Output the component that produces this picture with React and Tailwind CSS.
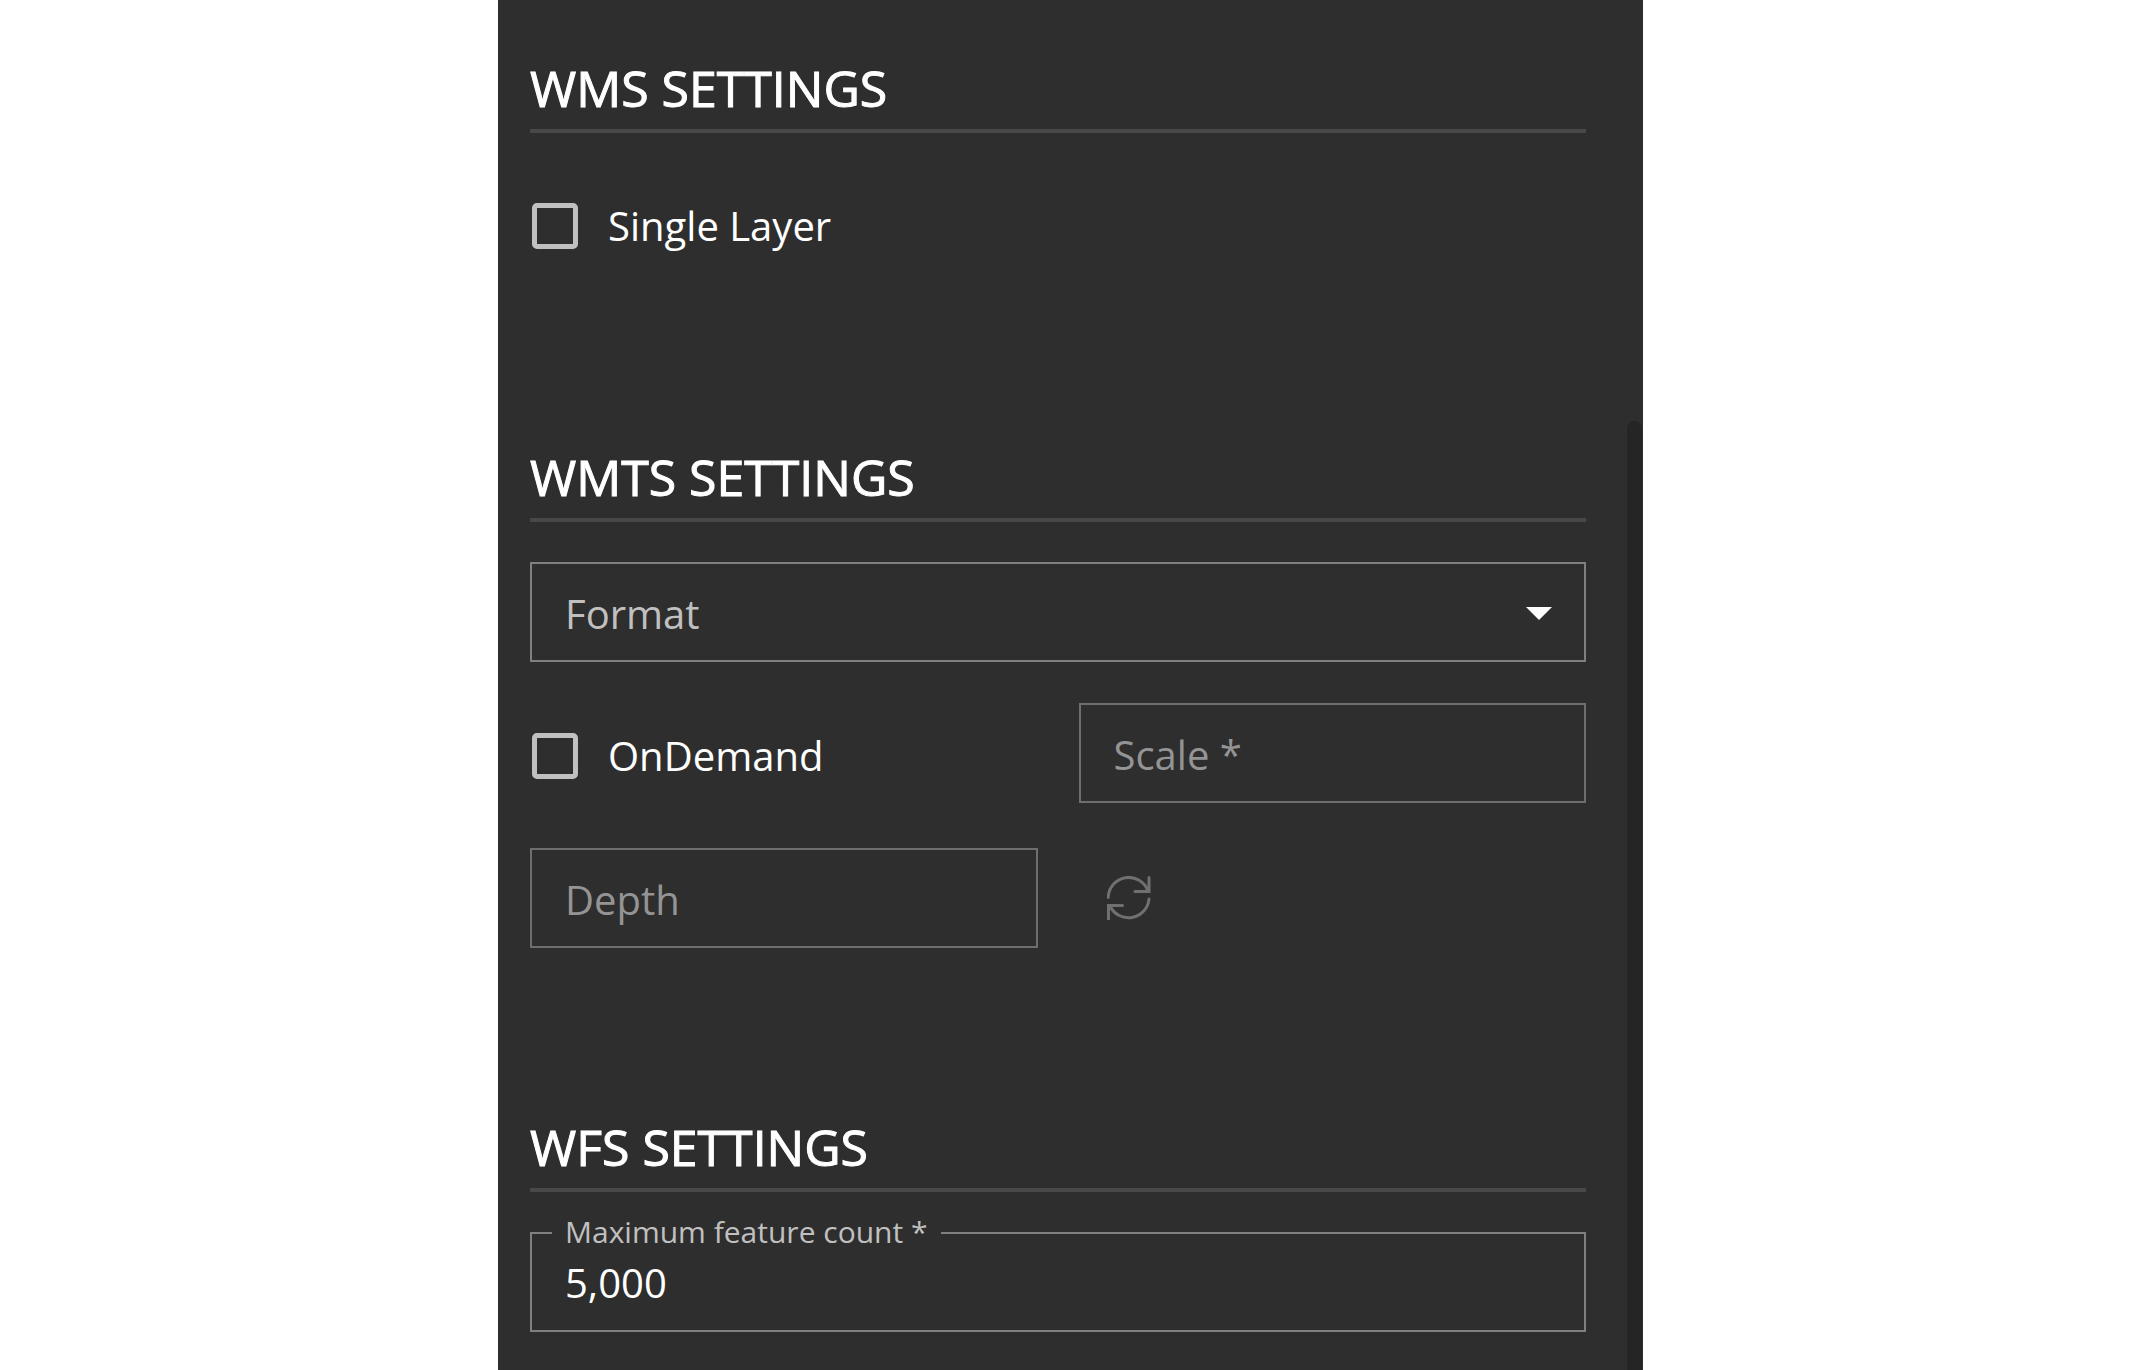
import React, { useState } from 'react';

const SectionTitle = ({ children }) => (
  <h2 className="border-b-4 border-[#484848] pb-[9px] text-[50px] leading-[64px] text-white [-webkit-text-stroke:1px_#fff]">
    {children}
  </h2>
);

const Checkbox = ({ id, label, checked, onChange }) => (
  <div className="flex h-[100px] items-center">
    <input
      type="checkbox"
      id={id}
      checked={checked}
      onChange={(e) => onChange(e.target.checked)}
      className="ml-[2px] size-[46px] shrink-0 appearance-none rounded-[5px] border-5 border-[#c0c0c0] checked:bg-[#c0c0c0]"
    />
    <label htmlFor={id} className="pl-[30px] text-[40px] leading-[56px] text-white">
      {label}
    </label>
  </div>
);

const EmptyField = ({ id, label }) => (
  <div className="relative">
    <input
      type="text"
      id={id}
      disabled
      className="block h-[100px] w-full border-2 border-[#6e6e6e] bg-transparent px-[34px] text-[40px]"
    />
    <label
      htmlFor={id}
      className="pointer-events-none absolute inset-0 flex items-center pt-[4px] pl-[35px] text-[40px] leading-[56px] text-[#949494]"
    >
      {label}
    </label>
  </div>
);

const RefreshIcon = () => (
  <svg
    width="44"
    height="44"
    viewBox="0 0 44 44"
    fill="none"
    stroke="currentColor"
    strokeWidth="3"
    strokeLinecap="round"
    aria-hidden="true"
  >
    <path d="M1.2 21.5A20.5 20.5 0 0 1 41 15" />
    <path d="M42 1.5V15.5H28" />
    <path d="M42 23A20.5 20.5 0 0 1 3 30" />
    <path d="M1.5 43V29.5H15.5" />
  </svg>
);

const App = () => {
  const [singleLayer, setSingleLayer] = useState(false);
  const [onDemand, setOnDemand] = useState(false);
  const [format, setFormat] = useState('');
  const [maxCount, setMaxCount] = useState('5,000');

  return (
    <div className="min-h-screen bg-white pr-[504px] pl-[498px] font-['Open_Sans',sans-serif]">
      <main className="relative min-h-screen bg-[#2e2e2e] pt-[56px] pr-[57px] pb-[38px] pl-[32px]">
        <section>
          <SectionTitle>WMS SETTINGS</SectionTitle>
          <div className="mt-[43px]">
            <Checkbox id="singleLayer" label="Single Layer" checked={singleLayer} onChange={setSingleLayer} />
          </div>
        </section>

        <section className="mt-[169px]">
          <SectionTitle>WMTS SETTINGS</SectionTitle>
          <div className="relative mt-[40px]">
            <select
              id="format"
              value={format}
              onChange={(e) => setFormat(e.target.value)}
              className="block h-[100px] w-full appearance-none border-2 border-[#808080] bg-transparent px-[34px] text-[40px] text-white"
            >
              <option value=""></option>
            </select>
            <label
              htmlFor="format"
              className="pointer-events-none absolute inset-0 flex items-center justify-between pt-[4px] pr-[34px] pl-[35px] text-[40px] leading-[56px] text-[#c0c0c0]"
            >
              Format
              <svg width="26" height="15" viewBox="0 0 26 15" fill="#fff" aria-hidden="true">
                <path d="M0 0H26L13 13Z" />
              </svg>
            </label>
          </div>
          <div className="mt-[41px] grid grid-cols-2 items-start gap-x-[41px]">
            <div className="pt-[3px]">
              <Checkbox id="onDemand" label="OnDemand" checked={onDemand} onChange={setOnDemand} />
            </div>
            <EmptyField id="scale" label="Scale *" />
          </div>
          <div className="mt-[42px] grid grid-cols-2 gap-x-[41px]">
            <EmptyField id="depth" label="Depth" />
            <button
              type="button"
              disabled
              aria-label="Refresh"
              className="flex size-[100px] items-center justify-center text-[#707070]"
            >
              <RefreshIcon />
            </button>
          </div>
        </section>

        <section className="mt-[167px]">
          <SectionTitle>WFS SETTINGS</SectionTitle>
          <div className="relative mt-[40px]">
            <input
              type="text"
              id="maxCount"
              value={maxCount}
              onChange={(e) => setMaxCount(e.target.value)}
              className="block h-[100px] w-full border-2 border-[#808080] bg-transparent px-[33px] text-[40px] text-white outline-none"
            />
            <label
              htmlFor="maxCount"
              className="absolute -top-[20px] left-[22px] bg-[#2e2e2e] px-[13px] text-[30px] leading-[40px] text-[#c0c0c0]"
            >
              Maximum feature count *
            </label>
          </div>
        </section>

        {/* scroll thumb */}
        <div className="absolute top-[421px] right-[1px] bottom-0 w-[15px] rounded-t-full bg-[#252525]" />
      </main>
    </div>
  );
};

export default App;
